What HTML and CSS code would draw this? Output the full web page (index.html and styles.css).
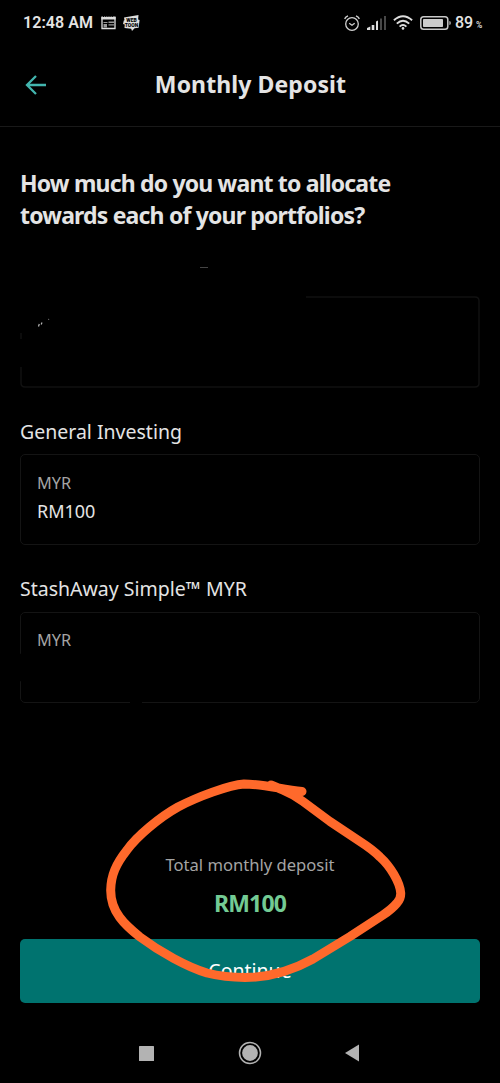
FILE: index.html
```html
<!DOCTYPE html>
<html lang="en">
<head>
<meta charset="utf-8">
<title>Monthly Deposit</title>
<link rel="stylesheet" href="styles.css">
</head>
<body>
<div class="screen">
  <div class="status">
    <span class="clock">12:48 AM</span>
    <svg class="news" width="15" height="14" viewBox="0 0 15 14"><path d="M1 1v11.500h13V1" fill="none" stroke="#ddd" stroke-width="1.300"/><path d="M.4 .5h14.200v3H.4z" fill="#ddd"/><path d="M2 .5h11" stroke="#000" stroke-width="1" stroke-dasharray="1 1.200"/><path d="M2.500 6h4v1h-4zM2.500 8h3.500v3.500H2.500zM7.500 5.500H13v1.400H7.500zM7.500 8.300H13V9.500H7.500z" fill="#999"/></svg>
    <svg class="toon" width="17" height="16" viewBox="0 0 17 16"><path d="M1 2.500L15.500 0l-.4 4.500 1.500.4-1 7.800-4 .5-2.600 2.800-.8-2.300-6.700-.7.300-3.500L0 9l.8-3.500.7-.2z" fill="#ddd"/><text class="toon-text" x="8.500" y="7" text-anchor="middle">WEB</text><text class="toon-text" x="8.500" y="11.500" text-anchor="middle">TOON</text></svg>
    <span class="grow"></span>
    <svg class="alarm" width="16" height="16" viewBox="0 0 16 16" fill="none" stroke="#d0d0d0"><circle cx="8" cy="9" r="6.300" stroke-width="1.300"/><path d="M.6 3.900Q1.700 1.700 4 .9M15.400 3.900Q14.300 1.700 12 .9" stroke-width="1.500"/><path d="M5.200 8.200L8 10.300l2.700-2" stroke-width="1.300"/></svg>
    <svg class="signal" width="19" height="14" viewBox="0 0 19 14"><path d="M0 12l3.300-1.500V14H0zM4.700 9h2.600v5H4.700zM9 5.500l2-1V14H9z" fill="#ddd"/><path d="M13 2.500h2V14h-2zM17 0h2v14h-2z" fill="#484848"/></svg>
    <svg class="wifi" width="20" height="15" viewBox="0 0 20 15" fill="none" stroke="#ddd" stroke-width="1.900"><path d="M.9 5.200Q10-2.900 19.100 5.200M3.800 8.600Q10 3 16.200 8.600M6.600 11.600Q10 8.500 13.400 11.600"/><circle cx="10" cy="13.400" r="1.300" fill="#ddd" stroke="none"/></svg>
    <svg class="battery" width="31" height="14" viewBox="0 0 31 14"><rect x=".8" y=".8" width="27" height="12.400" rx="2.800" fill="none" stroke="#c8c8c8" stroke-width="1.500"/><rect x="3" y="3" width="20" height="8" rx=".8" fill="#ccc"/><path d="M29.400 5q1.400 0 1.400 2t-1.400 2z" fill="#bbb"/></svg>
    <span class="pct">89</span><span class="sign">%</span>
  </div>
  <header class="header">
    <svg class="back" width="22" height="20" viewBox="0 0 22 20" fill="none" stroke="#42b5ae" stroke-width="2.300"><path d="M21 10H2M11 1L2 10l9 9"/></svg>
    <h1 class="heading">Monthly Deposit</h1>
  </header>
  <main class="content">
    <h2 class="question">How much do you want to allocate<br>towards each of your portfolios?</h2>
    <div class="field redacted">
      <svg class="outline" width="460" height="122" viewBox="0 0 460 122" fill="none"><path d="M180 .5h8" stroke="#444"/><path d="M286 30h169q4 0 4 4v82q0 4-4 4H5q-4 0-4-4v-16M1 66v6" stroke="#111" stroke-width="1.500"/><path d="M18.500 59.500l.8-2.500M21.200 57.500l.8-2M28.500 52.500l.4-.4" stroke="#bbb" stroke-width="1.200"/></svg>
    </div>
    <div class="field">
      <div class="name invest">General Investing</div>
      <div class="box"><div class="currency">MYR</div><div class="amount">RM100</div></div>
    </div>
    <div class="field">
      <div class="name simple">StashAway Simple™ MYR</div>
      <div class="box masked"><div class="currency">MYR</div></div>
    </div>
  </main>
  <footer class="summary">
    <div class="total-label">Total monthly deposit</div>
    <div class="total">RM100</div>
    <button class="continue">Continue</button>
  </footer>
  <nav class="nav">
    <svg width="15" height="15"><rect width="15" height="15" rx=".5" fill="#b3b3b3"/></svg>
    <svg width="24" height="24"><circle cx="12" cy="12" r="10.500" fill="none" stroke="#b3b3b3" stroke-width="1.500"/><circle cx="12" cy="12" r="7.900" fill="#b3b3b3"/></svg>
    <svg width="15" height="18"><path d="M14 .5v17L0 9z" fill="#b3b3b3"/></svg>
  </nav>
  <svg class="scribble" width="500" height="1083" viewBox="0 0 500 1083"><path d="M302 791.500C280 789 262 784 244 784C229 785 197 797 178 807C160 817 137 836 127 850C116 864 111 875 110.700 890C110.500 912 125 925 140 937C160 952 187 967 207 973C219 976 230 977.500 245 977.500C270 977.500 293 970 313 959L350 936.500L383 915Q392 909 397 903Q401 899 400.700 893C400 882 390 866 380 857C374 851 367 846 360 841.500L330 821.500L303 801.500Q293 794 283 790L271 785" fill="none" stroke="#ff692b" stroke-width="9" stroke-linecap="round" stroke-linejoin="round"/></svg>
</div>
</body>
</html>
```
FILE: styles.css
```css
* { box-sizing: border-box; }
body { margin: 0; background: #000; }
.screen { position: relative; width: 500px; height: 1083px; overflow: hidden; display: flex; flex-direction: column; background: #000; color: #e4e4e4; font-family: "Noto Sans", sans-serif; }
svg { display: block; flex: none; }
.status { height: 45px; padding: 0 18px 0 23px; display: flex; align-items: center; font-family: Roboto, sans-serif; white-space: nowrap; }
.clock { width: 70px; font-size: 16px; font-weight: 600; letter-spacing: .05px; }
.news { margin-left: 8px; }
.toon { margin-left: 7px; }
.toon-text { font: 900 5px Roboto, sans-serif; fill: #000; }
.grow { flex: 1; }
.signal { margin: 0 7px 0 7px; }
.battery { margin-left: 7px; }
.pct { width: 18px; margin-left: 4px; font-size: 16px; font-weight: 500; }
.sign { width: 6px; margin-left: 3px; padding-top: 5px; font-size: 8.500px; font-weight: 500; }
.header { height: 82px; padding: 0 25px 1px; display: grid; grid-template-columns: 22px 1fr 22px; align-items: center; border-bottom: 1px solid #191919; }
.back { margin-top: -1px; }
.heading { margin: -2px 0 0 1px; font-size: 23px; line-height: 32px; font-weight: 700; letter-spacing: .1px; text-align: center; white-space: nowrap; }
.content { height: 723px; padding: 41px 20px 0; }
.question { height: 64px; margin: 0; font-size: 23px; line-height: 31.500px; font-weight: 700; letter-spacing: -.82px; white-space: nowrap; }
.redacted { height: 122px; margin: 35px 0 29px; }
.name { height: 27px; margin-bottom: 9px; font-size: 19.500px; line-height: 27px; white-space: nowrap; }
.simple { margin-top: 30px; }
.box { height: 91px; padding: 15.500px 16px; border: 1.500px solid #141414; border-radius: 5px; font-size: 18px; line-height: 28px; }
.currency { height: 26px; font-size: 16.300px; line-height: 24px; color: #a4a4a4; }
.masked { margin-top: 10px; padding-top: 15px; clip-path: polygon(0 0, 100% 0, 100% 100%, 122px 100%, 122px 80%, 110px 80%, 110px 100%, 0 100%, 0 76%, 3px 76%, 3px 46%, 0 46%); }
.summary { height: 153px; padding: 0 20px; display: flex; flex-direction: column; align-items: center; }
.total-label { height: 30px; line-height: 30px; font-size: 16.600px; color: #a4a4a4; }
.total { height: 46px; line-height: 46px; font-size: 23px; font-weight: 700; letter-spacing: -.8px; color: #73cb94; }
.continue { width: 460px; height: 63.500px; margin-top: 13px; padding: 0 0 1px; border: 0; border-radius: 5px; flex: none; background: #00736f; color: #fff; font: 400 19.500px "Noto Sans", sans-serif; }
.nav { height: 80px; padding: 20px 140px 0 139px; display: flex; justify-content: space-between; align-items: center; }
.scribble { position: absolute; left: 0; top: 0; pointer-events: none; }
```
